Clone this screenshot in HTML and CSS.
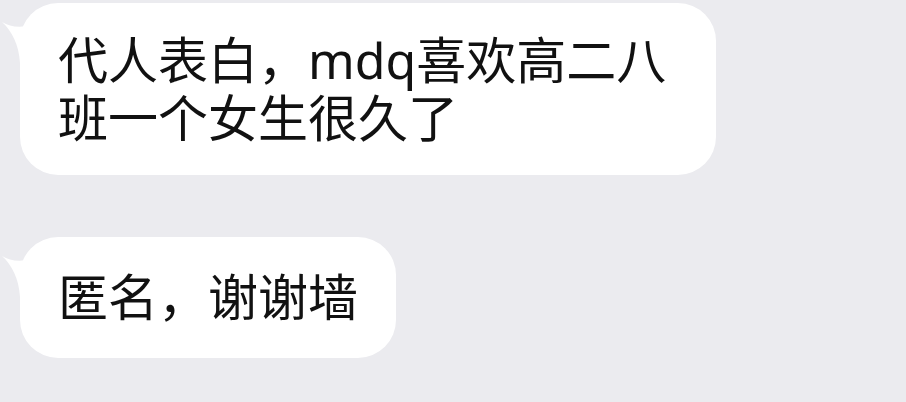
FILE: index.html
```html
<!DOCTYPE html>
<html lang="zh-CN">
<head>
<meta charset="utf-8">
<link rel="stylesheet" href="styles.css">
</head>
<body>
<div class="chat">
  <div class="bubble bubble-multi">
    <svg class="tail" width="32" height="44" viewBox="0 0 32 44"><path d="M2 3 C 10 8, 20 9, 32 6 L 32 44 L 20 44 C 19 26, 12 12, 2 3 Z" fill="#fff"/></svg>
    代人表白，mdq喜欢高二八班一个女生很久了
  </div>
  <div class="bubble bubble-single">
    <svg class="tail" width="32" height="44" viewBox="0 0 32 44"><path d="M2 3 C 10 8, 20 9, 32 6 L 32 44 L 20 44 C 19 26, 12 12, 2 3 Z" fill="#fff"/></svg>
    匿名，谢谢墙
  </div>
</div>
</body>
</html>
```
FILE: styles.css
```css
html, body {
  margin: 0;
  padding: 0;
  background: #ebebef;
}
body {
  width: 906px;
  height: 402px;
  overflow: hidden;
}
.chat {
  display: flex;
  flex-direction: column;
  align-items: flex-start;
  gap: 62px;
  padding: 3px 0 0 20px;
}
.bubble {
  position: relative;
  background: #fff;
  border-radius: 38px;
  padding: 28px 38px 28px 38px;
  max-width: 620px;
  font-family: "Noto Sans", "Noto Sans CJK SC", sans-serif;
  font-size: 50px;
  line-height: 58px;
  color: #111;
}
.bubble-single {
  padding-top: 31px;
  padding-bottom: 32px;
}
.tail {
  position: absolute;
  left: -20px;
  top: 16px;
}
```
